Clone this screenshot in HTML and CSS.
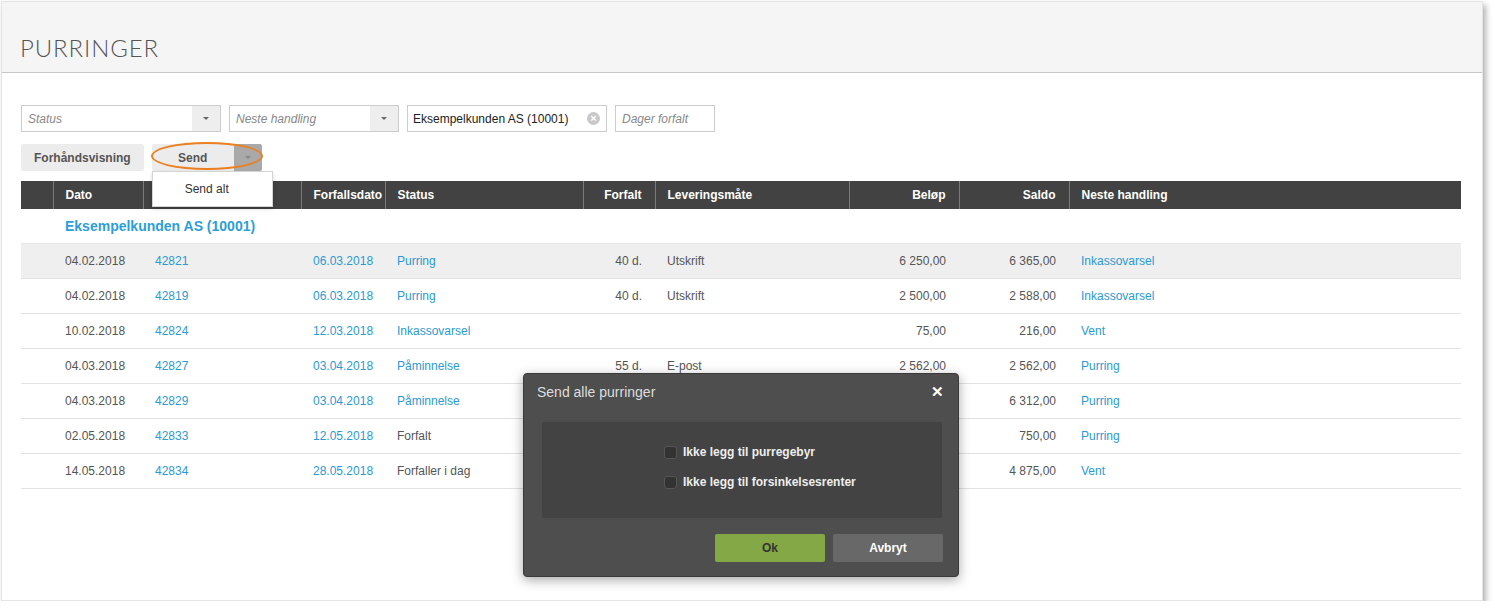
FILE: index.html
```html
<!DOCTYPE html>
<html lang="no">

<head>
    <meta charset="UTF-8">
    <meta name="viewport" content="width=device-width, initial-scale=1.0">
    <title>Purringer</title>
    <link rel="stylesheet" href="styles.css">
</head>

<body>
    <div class="window">
        <header class="page-header">
            <h1>PURRINGER</h1>
        </header>

        <main class="content">
            <div class="filters">
                <div class="select status-select">
                    <span class="placeholder">Status</span>
                    <span class="select-btn"><span class="caret"></span></span>
                </div>
                <div class="select next-select">
                    <span class="placeholder">Neste handling</span>
                    <span class="select-btn"><span class="caret"></span></span>
                </div>
                <div class="select customer-select">
                    <span class="value">Eksempelkunden AS (10001)</span>
                    <span class="clear">&times;</span>
                </div>
                <div class="select days-input">
                    <span class="placeholder">Dager forfalt</span>
                </div>
            </div>

            <div class="actions">
                <button class="btn">Forhåndsvisning</button>
                <div class="split">
                    <button class="btn split-main">Send</button>
                    <button class="btn split-toggle"><span class="caret"></span></button>
                    <span class="highlight"></span>
                    <ul class="menu">
                        <li>Send alt</li>
                    </ul>
                </div>
            </div>

            <table class="grid">
                <colgroup>
                    <col style="width: 32px">
                    <col style="width: 90px">
                    <col style="width: 158px">
                    <col style="width: 84px">
                    <col style="width: 198px">
                    <col style="width: 72px">
                    <col style="width: 194px">
                    <col style="width: 110px">
                    <col style="width: 110px">
                    <col>
                </colgroup>
                <thead>
                    <tr>
                        <th></th>
                        <th>Dato</th>
                        <th></th>
                        <th>Forfallsdato</th>
                        <th>Status</th>
                        <th class="num">Forfalt</th>
                        <th>Leveringsmåte</th>
                        <th class="num">Beløp</th>
                        <th class="num">Saldo</th>
                        <th>Neste handling</th>
                    </tr>
                </thead>
                <tbody>
                    <tr class="group">
                        <td></td>
                        <td colspan="9"><a>Eksempelkunden AS (10001)</a></td>
                    </tr>
                    <tr class="hover">
                        <td></td>
                        <td>04.02.2018</td>
                        <td><a>42821</a></td>
                        <td><a>06.03.2018</a></td>
                        <td><a>Purring</a></td>
                        <td class="num">40 d.</td>
                        <td>Utskrift</td>
                        <td class="num">6 250,00</td>
                        <td class="num">6 365,00</td>
                        <td><a>Inkassovarsel</a></td>
                    </tr>
                    <tr>
                        <td></td>
                        <td>04.02.2018</td>
                        <td><a>42819</a></td>
                        <td><a>06.03.2018</a></td>
                        <td><a>Purring</a></td>
                        <td class="num">40 d.</td>
                        <td>Utskrift</td>
                        <td class="num">2 500,00</td>
                        <td class="num">2 588,00</td>
                        <td><a>Inkassovarsel</a></td>
                    </tr>
                    <tr>
                        <td></td>
                        <td>10.02.2018</td>
                        <td><a>42824</a></td>
                        <td><a>12.03.2018</a></td>
                        <td><a>Inkassovarsel</a></td>
                        <td class="num"></td>
                        <td></td>
                        <td class="num">75,00</td>
                        <td class="num">216,00</td>
                        <td><a>Vent</a></td>
                    </tr>
                    <tr>
                        <td></td>
                        <td>04.03.2018</td>
                        <td><a>42827</a></td>
                        <td><a>03.04.2018</a></td>
                        <td><a>Påminnelse</a></td>
                        <td class="num">55 d.</td>
                        <td>E-post</td>
                        <td class="num">2 562,00</td>
                        <td class="num">2 562,00</td>
                        <td><a>Purring</a></td>
                    </tr>
                    <tr>
                        <td></td>
                        <td>04.03.2018</td>
                        <td><a>42829</a></td>
                        <td><a>03.04.2018</a></td>
                        <td><a>Påminnelse</a></td>
                        <td class="num">55 d.</td>
                        <td>E-post</td>
                        <td class="num">6 312,00</td>
                        <td class="num">6 312,00</td>
                        <td><a>Purring</a></td>
                    </tr>
                    <tr>
                        <td></td>
                        <td>02.05.2018</td>
                        <td><a>42833</a></td>
                        <td><a>12.05.2018</a></td>
                        <td>Forfalt</td>
                        <td class="num"></td>
                        <td></td>
                        <td class="num">750,00</td>
                        <td class="num">750,00</td>
                        <td><a>Purring</a></td>
                    </tr>
                    <tr>
                        <td></td>
                        <td>14.05.2018</td>
                        <td><a>42834</a></td>
                        <td><a>28.05.2018</a></td>
                        <td>Forfaller i dag</td>
                        <td class="num"></td>
                        <td></td>
                        <td class="num">4 875,00</td>
                        <td class="num">4 875,00</td>
                        <td><a>Vent</a></td>
                    </tr>
                </tbody>
            </table>
        </main>

        <!-- Send all dialog -->
        <div class="dialog">
            <div class="dialog-head">
                <span class="dialog-title">Send alle purringer</span>
                <span class="dialog-close">&#10005;</span>
            </div>
            <div class="dialog-body">
                <label class="check"><span class="box"></span>Ikke legg til purregebyr</label>
                <label class="check"><span class="box"></span>Ikke legg til forsinkelsesrenter</label>
            </div>
            <div class="dialog-foot">
                <button class="dbtn ok">Ok</button>
                <button class="dbtn cancel">Avbryt</button>
            </div>
        </div>
    </div>
</body>

</html>
```

FILE: styles.css
```css
body {
    margin: 0;
    background-color: #ffffff;
    font-family: "Liberation Sans", Arial, sans-serif;
    font-size: 12px;
    color: #555;
}

.window {
    position: relative;
    margin: 1px 0 0 1px;
    width: 1480px;
    height: 598px;
    border: 1px solid #e4e4e4;
    background-color: #ffffff;
    box-shadow: 3px 4px 6px rgba(0, 0, 0, 0.3);
}

.page-header {
    height: 70px;
    background-color: #f5f5f5;
    border-bottom: 1px solid #c6c6c6;
}

.page-header h1 {
    margin: 0;
    padding: 32px 0 0 18px;
    font-family: Lato, "Open Sans", sans-serif;
    font-weight: 300;
    font-size: 24px;
    line-height: 28px;
    letter-spacing: 0.9px;
    color: #555;
}

.content {
    padding: 32px 20px 0 19px;
}

/* filter row */
.filters {
    display: flex;
    gap: 8px;
}

.select {
    display: flex;
    align-items: center;
    height: 25px;
    border: 1px solid #ccc;
    background-color: #fff;
    box-sizing: content-box;
}

.status-select {
    width: 198px;
}

.next-select {
    width: 168px;
}

.customer-select {
    width: 198px;
}

.days-input {
    width: 98px;
}

.placeholder {
    flex: 1;
    padding-left: 6px;
    font-style: italic;
    color: #888;
}

.value {
    flex: 1;
    padding-left: 5px;
    color: #222;
}

.select-btn {
    display: flex;
    align-items: center;
    justify-content: center;
    width: 28px;
    height: 100%;
    background-color: #eee;
}

.caret {
    width: 0;
    height: 0;
    border-left: 3px solid transparent;
    border-right: 3px solid transparent;
    border-top: 3px solid #666;
}

.clear {
    display: flex;
    align-items: center;
    justify-content: center;
    width: 13px;
    height: 13px;
    margin-right: 6px;
    border-radius: 50%;
    background-color: #c8c8c8;
    color: #fff;
    font-size: 11px;
    font-weight: bold;
    line-height: 13px;
}

/* buttons */
.actions {
    display: flex;
    gap: 8px;
    margin-top: 12px;
    height: 27px;
}

.btn {
    height: 27px;
    padding: 0 13px;
    border: none;
    border-radius: 2px;
    background-color: #ececec;
    font-family: "Liberation Sans", Arial, sans-serif;
    font-size: 12px;
    font-weight: bold;
    color: #555;
}

.split {
    position: relative;
    display: flex;
}

.split-main {
    width: 82px;
    border-radius: 2px 0 0 2px;
}

.split-toggle {
    display: flex;
    align-items: center;
    justify-content: center;
    width: 28px;
    padding: 0;
    border-radius: 0 2px 2px 0;
    background-color: #a9a9a9;
}

.split-toggle .caret {
    border-top-color: #888;
}

.highlight {
    position: absolute;
    left: -1px;
    top: -2px;
    width: 108px;
    height: 24px;
    border: 2.5px solid #ea8020;
    border-radius: 50%;
}

.menu {
    position: absolute;
    left: 0;
    top: 27px;
    z-index: 2;
    margin: 0;
    padding: 0;
    list-style: none;
    width: 119px;
    border: 1px solid #d4d4d4;
    background-color: #fff;
    box-shadow: 0 2px 4px rgba(0, 0, 0, 0.15);
}

.menu li {
    padding: 0 32px;
    line-height: 34px;
    color: #333;
}

/* table */
.grid {
    width: 1440px;
    margin-top: 10px;
    border-collapse: collapse;
    table-layout: fixed;
}

.grid th {
    height: 28px;
    padding: 0 12px;
    background-color: #424242;
    color: #fff;
    font-weight: bold;
    text-align: left;
    white-space: nowrap;
    border-left: 1px solid #7a7a7a;
}

.grid th:first-child {
    border-left: none;
}

.grid td {
    height: 34px;
    padding: 0 12px;
    border-bottom: 1px solid #e2e2e2;
    white-space: nowrap;
}

.grid .num {
    text-align: right;
    padding-right: 13px;
}

.grid a {
    color: #2a9ad6;
}

.grid tr.group td {
    height: 34px;
    padding-top: 0;
    border-bottom: 1px solid #e6e6e6;
}

.grid tr.group a {
    font-size: 14px;
    font-weight: bold;
    color: #2c9ed8;
}

.grid tr.hover td {
    background-color: #efefef;
}

/* dialog */
.dialog {
    position: absolute;
    left: 521px;
    top: 371px;
    z-index: 3;
    width: 436px;
    height: 204px;
    box-sizing: border-box;
    padding: 0 15px 16px 18px;
    border-radius: 4px;
    background-color: #4e4e4e;
    box-shadow: 0 3px 12px rgba(0, 0, 0, 0.35);
    border: 1px solid #3a3a3a;
}

.dialog-head {
    display: flex;
    justify-content: space-between;
    align-items: center;
    height: 35px;
    margin-left: -5px;
    padding-top: 1px;
    box-sizing: border-box;
}

.dialog-title {
    font-size: 14px;
    color: #ddd;
}

.dialog-close {
    margin-right: -1px;
    font-size: 15px;
    font-weight: bold;
    color: #fff;
}

.dialog-body {
    display: flex;
    flex-direction: column;
    justify-content: center;
    gap: 16px;
    width: 400px;
    height: 96px;
    box-sizing: border-box;
    margin-top: 13px;
    padding-bottom: 6px;
    background-color: #434343;
    border-radius: 2px;
}

.check {
    display: flex;
    align-items: center;
    gap: 6px;
    margin-left: 122px;
    font-weight: bold;
    color: #eee;
    white-space: nowrap;
}

.box {
    flex-shrink: 0;
    width: 11px;
    height: 11px;
    border: 1px solid #555;
    border-radius: 3px;
    background-color: #333;
}

.dialog-foot {
    display: flex;
    justify-content: flex-end;
    gap: 8px;
    margin-top: 16px;
}

.dbtn {
    width: 110px;
    height: 28px;
    border: none;
    border-radius: 2px;
    font-family: "Liberation Sans", Arial, sans-serif;
    font-size: 12px;
    font-weight: bold;
}

.ok {
    background-color: #84a846;
    color: #333;
}

.cancel {
    background-color: #686868;
    color: #fff;
}
```
